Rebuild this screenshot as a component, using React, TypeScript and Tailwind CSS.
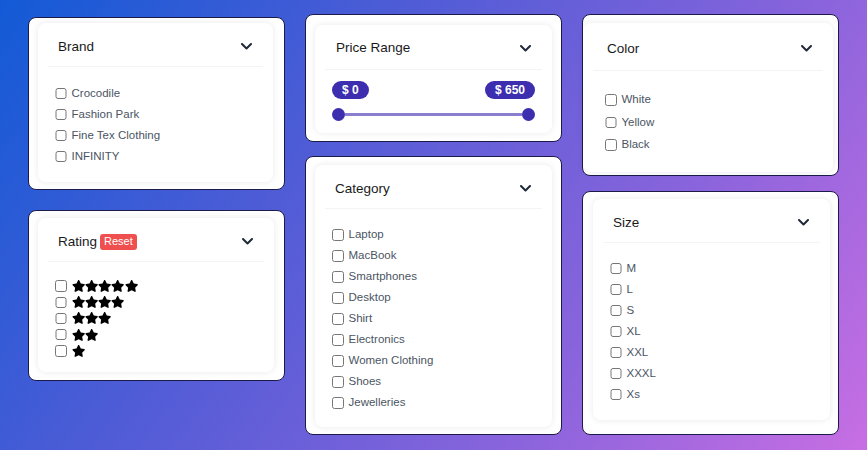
import React from "react";
import { FaStar } from "react-icons/fa";

const brands = ["Crocodile", "Fashion Park", "Fine Tex Clothing", "INFINITY"];
const categories = [
  "Laptop",
  "MacBook",
  "Smartphones",
  "Desktop",
  "Shirt",
  "Electronics",
  "Women Clothing",
  "Shoes",
  "Jewelleries",
];
const colors = ["White", "Yellow", "Black"];
const sizes = ["M", "L", "S", "XL", "XXL", "XXXL", "Xs"];

function Chevron() {
  return (
    <svg width="11" height="7" viewBox="0 0 11 7" fill="none" className="shrink-0">
      <polyline
        points="1,1 5.5,5.5 10,1"
        stroke="#1f2937"
        strokeWidth="2"
        strokeLinecap="round"
        strokeLinejoin="round"
      />
    </svg>
  );
}

function Header({ title, badge, tall }: { title: string; badge?: React.ReactNode; tall?: boolean }) {
  return (
    <div
      className={`flex items-center justify-between border-b border-gray-100 pt-[4px] pl-[10px] pr-[11px] ${
        tall ? "h-[48px] pl-[14px] pr-[9px]" : "h-[44px]"
      }`}
    >
      <div className="flex items-center gap-[3px]">
        <span className="text-[13.5px] leading-5 text-[#1a1a1a]">{title}</span>
        {badge}
      </div>
      <Chevron />
    </div>
  );
}

function CheckRow({ label, tall }: { label: React.ReactNode; tall?: boolean }) {
  return (
    <label className={`flex items-center gap-[5px] ${tall ? "h-[22.5px]" : "h-[21px]"}`}>
      <input type="checkbox" className="m-0 h-[11.5px] w-[11.5px] shrink-0" />
      <span className="text-[11.5px] text-[#4b5563]">{label}</span>
    </label>
  );
}

function Outer({ className, children }: { className: string; children: React.ReactNode }) {
  return (
    <div className={`flex flex-col rounded-[8px] border-[1.5px] border-[#1c1a48] bg-white ${className}`}>
      <div className="flex-1 rounded-[8px] bg-white px-[10px] shadow-[0_0_7px_rgba(0,0,0,0.09)]">
        {children}
      </div>
    </div>
  );
}

export default function App() {
  return (
    <div
      className="flex h-[450px] w-[867px] gap-5 overflow-hidden bg-[linear-gradient(125deg,#135ad6_0%,#4f5cd6_35%,#8a64dc_70%,#c86ee3_100%)] px-[28px]"
      style={{ fontFamily: '"Liberation Sans", Arial, sans-serif' }}
    >
      {/* column 1 */}
      <div className="flex w-[257px] flex-col gap-[20px] pt-[17px]">
        <Outer className="h-[173px] pt-[5px] pr-[11px] pb-[7px] pl-[9px]">
          <Header title="Brand" />
          <div className="pt-[16px] pl-[7px]">
            {brands.map((b) => (
              <CheckRow key={b} label={b} />
            ))}
          </div>
        </Outer>

        <Outer className="h-[171px] pt-[7px] pr-[10px] pb-[8px] pl-[9px]">
          <Header
            title="Rating"
            badge={
              <span className="flex h-[16px] items-center rounded-[3px] bg-[#ef4f4f] px-[4px] text-[11px] font-medium text-white">
                Reset
              </span>
            }
          />
          <div className="pt-[16px] pl-[7px]">
            {[5, 4, 3, 2, 1].map((n) => (
              <label key={n} className="flex h-[16.2px] items-center gap-[5px]">
                <input type="checkbox" className="m-0 h-[11.5px] w-[11.5px] shrink-0" />
                <span className="flex">
                  {Array.from({ length: n }).map((_, i) => (
                    <FaStar key={i} className="h-[12px] w-[13.3px] text-black" />
                  ))}
                </span>
              </label>
            ))}
          </div>
        </Outer>
      </div>

      {/* column 2 */}
      <div className="flex w-[257px] flex-col gap-[14px] pt-[14px]">
        <Outer className="h-[128px] pt-[10px] pr-[9px] pb-[8px] pl-[9px]">
          <div className="flex h-[45px] items-center justify-between border-b border-gray-100 pt-[2px] pl-[11px] pr-[11px]">
            <span className="text-[13.5px] leading-5 text-[#1a1a1a]">Price Range</span>
            <Chevron />
          </div>
          <div className="px-[7px] pt-[11px]">
            <div className="flex justify-between">
              <span className="flex h-[18px] items-center rounded-full bg-[#3d2eaf] px-[10px] text-[12px] font-bold text-white">
                $ 0
              </span>
              <span className="flex h-[18px] items-center rounded-full bg-[#3d2eaf] px-[10px] text-[12px] font-bold text-white">
                $ 650
              </span>
            </div>
            <div className="mt-[9px] flex items-center">
              <span className="h-[13px] w-[13px] shrink-0 rounded-full bg-[#3d2eaf]" />
              <span className="h-[3px] flex-1 bg-[#8a7ed0]" />
              <span className="h-[13px] w-[13px] shrink-0 rounded-full bg-[#3d2eaf]" />
            </div>
          </div>
        </Outer>

        <Outer className="h-[279px] pt-[8px] pr-[9px] pb-[7px] pl-[9px]">
          <Header title="Category" />
          <div className="pt-[15.5px] pl-[7px]">
            {categories.map((c) => (
              <CheckRow key={c} label={c} />
            ))}
          </div>
        </Outer>
      </div>

      {/* column 3 */}
      <div className="flex w-[257px] flex-col gap-[15px] pt-[14px]">
        <Outer className="h-[162px] pt-[8px] pr-[5px] pb-[3px] pl-[0px]">
          <Header title="Color" tall />
          <div className="pt-[17.5px] pl-[12px]">
            {colors.map((c) => (
              <CheckRow key={c} label={c} tall />
            ))}
          </div>
        </Outer>

        <Outer className="h-[244px] pt-[7px] pr-[8px] pb-[14px] pl-[10px]">
          <Header title="Size" />
          <div className="pt-[15px] pl-[7px]">
            {sizes.map((s) => (
              <CheckRow key={s} label={s} />
            ))}
          </div>
        </Outer>
      </div>
    </div>
  );
}
